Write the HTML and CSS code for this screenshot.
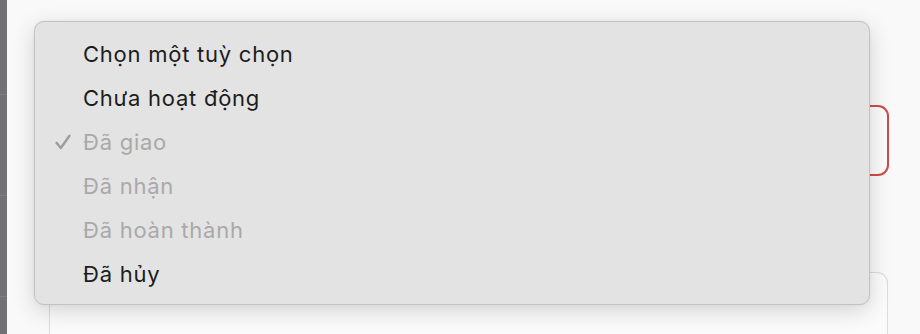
FILE: index.html
```html
<!DOCTYPE html>
<html lang="vi">
<head>
<meta charset="utf-8">
<link rel="stylesheet" href="styles.css">
</head>
<body>
<div class="app">
  <aside class="sidebar">
    <div class="sb-row"></div>
    <div class="sb-row"></div>
    <div class="sb-row"></div>
  </aside>
  <main class="content">
    <div class="field field-error"></div>
    <div class="card"></div>
  </main>
</div>
<div class="menu" role="listbox">
  <div class="item">Chọn một tuỳ chọn</div>
  <div class="item">Chưa hoạt động</div>
  <div class="item disabled checked"><svg class="check" viewBox="0 0 18 18" width="18" height="18"><path d="M2.5 9.8 L6.8 15 L15.5 2.8" fill="none" stroke="currentColor" stroke-width="2.4" stroke-linecap="round" stroke-linejoin="round"/></svg>Đã giao</div>
  <div class="item disabled">Đã nhận</div>
  <div class="item disabled">Đã hoàn thành</div>
  <div class="item">Đã hủy</div>
</div>
</body>
</html>
```
FILE: styles.css
```css
html, body {
  margin: 0;
  padding: 0;
  width: 920px;
  height: 334px;
  overflow: hidden;
  background: #f9f9f9;
  font-family: Inter, "Liberation Sans", sans-serif;
}
.app {
  display: flex;
  height: 334px;
}
.sidebar {
  width: 7px;
  flex: none;
  background: #717176;
  display: flex;
  flex-direction: column;
  padding-top: 94px;
  gap: 100px;
}
.sb-row {
  height: 1px;
  background: #7d7d82;
}
.content {
  flex: 1;
  padding: 105px 31px 0 42px;
  display: flex;
  flex-direction: column;
  gap: 96px;
}
.field {
  height: 67px;
  border-radius: 11px;
  border: 2px solid #cc4d46;
  background: #fbfbfb;
}
.card {
  flex: 1;
  border: 1px solid #dcdcdc;
  border-bottom: none;
  border-radius: 11px 11px 0 0;
  margin-right: 1px;
  background: #fbfbfb;
}
.menu {
  position: absolute;
  left: 34px;
  top: 21px;
  width: 836px;
  height: 284px;
  box-sizing: border-box;
  background: #e3e3e3;
  border: 1px solid #c3c3c3;
  border-radius: 10px;
  box-shadow: 0 6px 22px rgba(0,0,0,0.16), 0 0 2px rgba(0,0,0,0.08);
  padding-top: 10px;
}
.item {
  position: relative;
  height: 44px;
  line-height: 44px;
  padding-left: 48px;
  font-size: 22px;
  color: #1c1c1c;
  letter-spacing: 0.75px;
}
.item.disabled {
  color: #a9a9a9;
}
.check {
  position: absolute;
  left: 19px;
  top: 13px;
  color: #9d9d9d;
}
```
